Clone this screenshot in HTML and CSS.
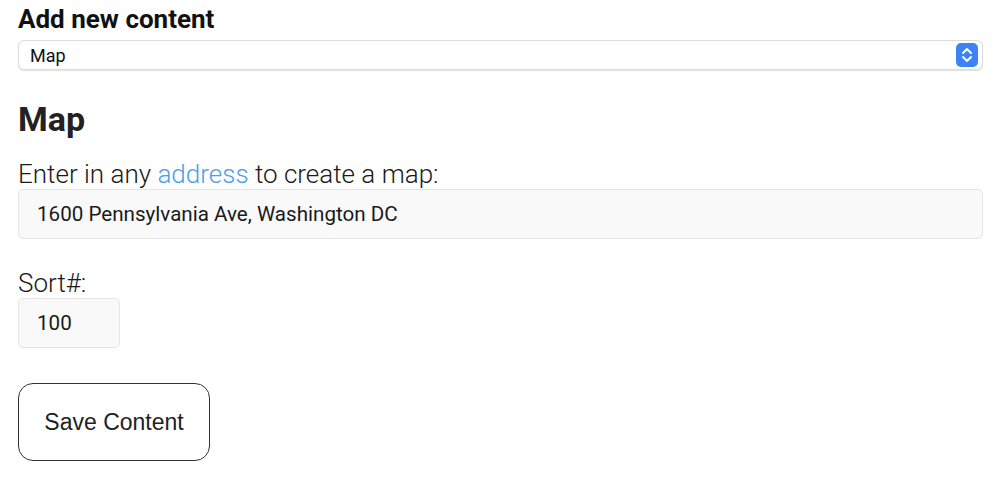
FILE: index.html
```html
<!DOCTYPE html>
<html lang="en">
<head>
  <meta charset="UTF-8" />
  <meta name="viewport" content="width=device-width, initial-scale=1" />
  <title>Add new content</title>
  <link rel="stylesheet" href="styles.css">
</head>
<body>
  <h1>Add new content</h1>
  <div class="select-wrap">
    <select id="contentType">
      <option>Map</option>
    </select>
    <svg class="stepper" width="22" height="24" viewBox="0 0 22 24">
      <rect x="0" y="0" width="22" height="24" rx="5" fill="#3e82f7"/>
      <path d="M7 10 L11 6 L15 10" fill="none" stroke="#fff" stroke-width="2" stroke-linecap="round" stroke-linejoin="round"/>
      <path d="M7 14 L11 18 L15 14" fill="none" stroke="#fff" stroke-width="2" stroke-linecap="round" stroke-linejoin="round"/>
    </svg>
  </div>

  <h2>Map</h2>
  <label class="field-label" for="address">Enter in any <a href="#">address</a> to create a map:</label>
  <input type="text" id="address" class="text-input" value="1600 Pennsylvania Ave, Washington DC" />

  <label class="field-label sort-label" for="sort">Sort#:</label>
  <input type="text" id="sort" class="text-input sort-input" value="100" />

  <button class="save">Save Content</button>
</body>
</html>
```

FILE: styles.css
```css
body {
  font-family: Roboto, "Liberation Sans", sans-serif;
  color: #1f1f1f;
  margin: 0;
  padding: 5px 17px 0 18px;
  background: #fff;
}
h1 {
  font-size: 26px;
  line-height: 28px;
  font-weight: 700;
  margin: 0;
  color: #111;
}
.select-wrap {
  position: relative;
  margin-top: 7px;
}
.select-wrap select {
  display: block;
  width: 100%;
  height: 30px;
  appearance: none;
  -webkit-appearance: none;
  background: #fff;
  border: 1px solid #dcdcdc;
  border-radius: 6px;
  box-shadow: 0 1px 1px rgba(0, 0, 0, 0.12);
  font-family: Roboto, "Liberation Sans", sans-serif;
  font-size: 18px;
  color: #111;
  padding: 0 11px;
}
.stepper {
  position: absolute;
  right: 5px;
  top: 3px;
}
h2 {
  font-size: 34px;
  line-height: 40px;
  font-weight: 700;
  margin: 29px 0 0;
  color: #222;
}
.field-label {
  display: block;
  font-size: 26px;
  line-height: 28px;
  font-weight: 300;
  margin-top: 21px;
  color: #1a1a1a;
}
.field-label a {
  color: #4ca0e8;
  text-decoration: none;
}
.sort-label {
  margin-top: 30px;
}
.text-input {
  display: block;
  box-sizing: border-box;
  width: 100%;
  height: 50px;
  margin-top: 1px;
  padding: 0 18px;
  background: #f9f9f9;
  border: 1px solid #e4e4e4;
  border-radius: 5px;
  font-family: Roboto, "Liberation Sans", sans-serif;
  font-size: 20.6px;
  color: #1a1a1a;
}
.sort-input {
  width: 102px;
}
.save {
  display: block;
  margin-top: 35px;
  width: 192px;
  height: 78px;
  background: #fff;
  border: 1.5px solid #333;
  border-radius: 15px;
  font-family: "Liberation Sans", Arial, sans-serif;
  font-size: 23px;
  color: #222;
  cursor: pointer;
}
```
